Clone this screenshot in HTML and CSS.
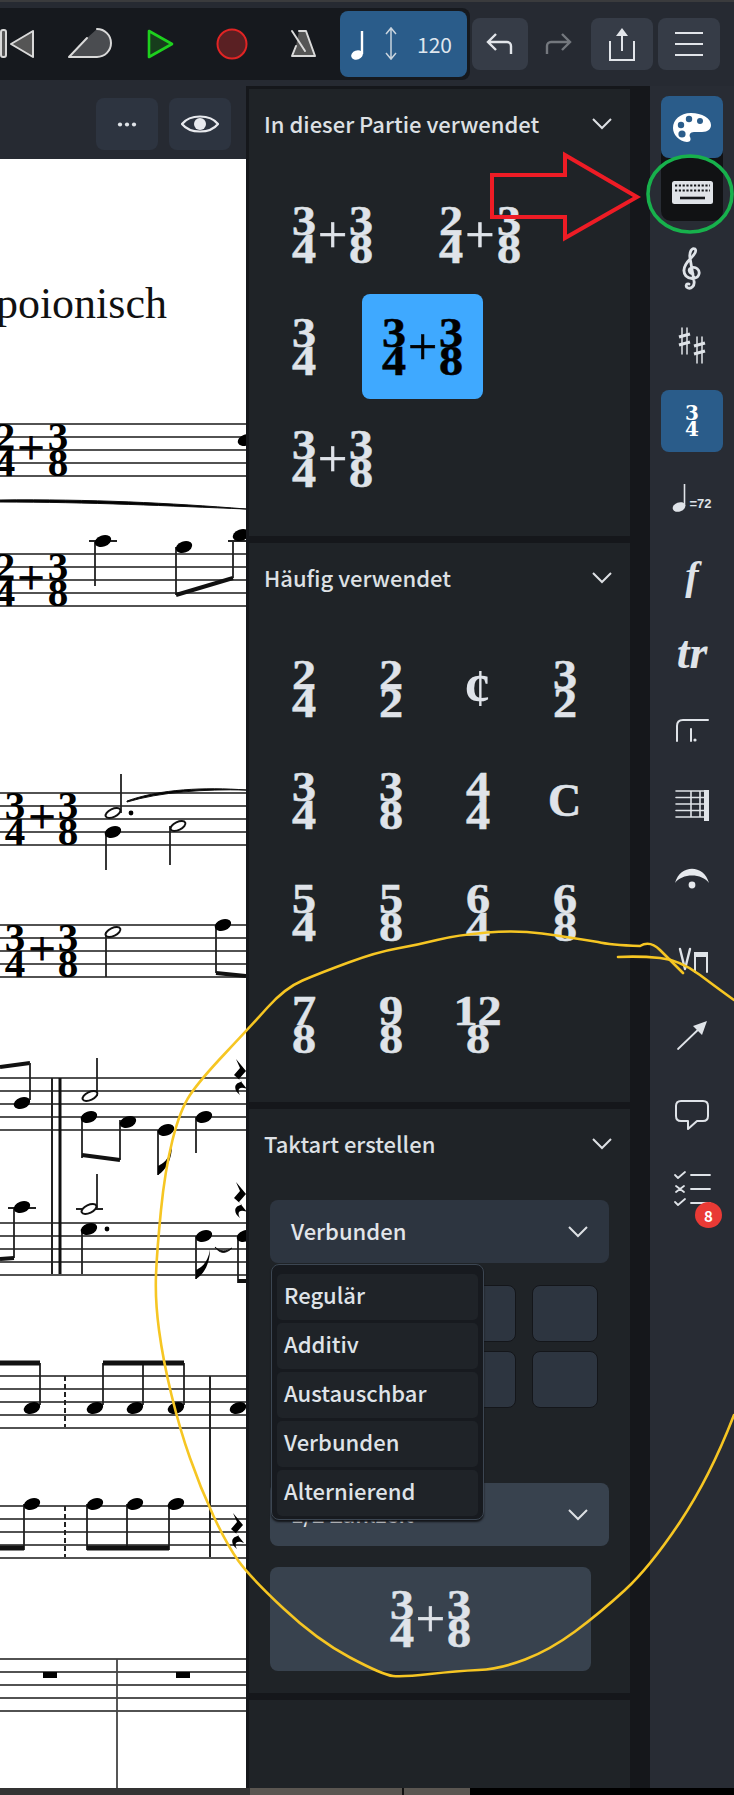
FILE: index.html
```html
<!DOCTYPE html>
<html lang="de">
<head>
  <meta charset="UTF-8">
  <title>Taktart erstellen</title>
  <link rel="stylesheet" href="styles.css">
</head>
<body>
  <div class="app">
    <!-- top toolbar -->
    <header class="topbar">
      <div class="transport">
        <svg class="slot" viewBox="-19 24 72 40"><rect class="ico-line" x="1" y="30" width="5" height="27" rx="2" fill="#555"/><path class="ico-line" d="M33 31 11 44l22 13z" fill="#555"/></svg>
        <svg class="slot" viewBox="53 24 72 40"><path d="M87 38 97 29a14 14 0 0 1 0 28H69z" fill="#4a4c50"/><path class="ico-line" d="M87 38 69 57h28a14 14 0 0 0 0-28" fill="none"/></svg>
        <svg class="slot" viewBox="125 24 72 40"><path d="M149 31 172 44 149 57z" fill="#173d1c" stroke="#1ed01e" stroke-width="2.6" stroke-linejoin="round"/></svg>
        <svg class="slot" viewBox="197 24 72 40"><circle cx="232" cy="44" r="14.5" fill="#5a2023" stroke="#e02424" stroke-width="2"/></svg>
        <svg class="slot" viewBox="269 24 72 40"><path class="ico-line" d="M299 31h7l9 25h-23l4-10" fill="#555"/><path class="ico-line" d="M292 31 305 51"/></svg>
        <button class="tempo">
          <svg width="32" height="40" viewBox="349 24 32 40"><ellipse cx="358" cy="55" rx="6" ry="4.6" fill="#fff" transform="rotate(-20 358 55)"/><path d="M363 31V54" stroke="#fff" stroke-width="2.4"/></svg>
          <svg width="22" height="40" viewBox="379 24 22 40"><path d="M390 29V58M385 34 390 28 395 34M385 53 390 59 395 53" fill="none" stroke="#c9d4de" stroke-width="1.5"/></svg>
          <span class="tempo-num">120</span>
        </button>
      </div>
      <button class="top-btn"><svg width="30" height="24" viewBox="0 0 30 24"><path d="M4 10h18a4 4 0 0 1 4 4v8M11 2 3 10l8 8" fill="none" stroke="#e2e5ea" stroke-width="2.4"/></svg></button>
      <span class="top-btn top-btn-off"><svg width="30" height="24" viewBox="0 0 30 24"><path d="M26 10H8a4 4 0 0 0-4 4v8M19 2l8 8-8 8" fill="none" stroke="#74787e" stroke-width="2.4"/></svg></span>
      <button class="top-btn top-btn-gap"><svg width="30" height="36" viewBox="0 0 30 36"><path d="M3 15v19h24V15M15 25V4" fill="none" stroke="#e2e5ea" stroke-width="2"/><path d="M9 10l6-8 6 8z" fill="#e2e5ea"/></svg></button>
      <button class="top-btn top-btn-wide"><svg width="30" height="24" viewBox="0 0 30 24"><path d="M1 1h28M1 12h28M1 23h28" stroke="#e2e5ea" stroke-width="2.2"/></svg></button>
    </header>

    <div class="main">
      <!-- score -->
      <section class="score-col">
        <div class="score-bar">
          <button class="score-btn"><svg width="20" height="5" viewBox="0 0 20 5"><circle cx="3" cy="2.5" r="2.1" fill="#dfe3e8"/><circle cx="10" cy="2.5" r="2.1" fill="#dfe3e8"/><circle cx="17" cy="2.5" r="2.1" fill="#dfe3e8"/></svg></button>
          <button class="score-btn"><svg width="38" height="26" viewBox="0 0 38 26"><path d="M1 13C9 3 29 3 37 13 29 23 9 23 1 13z" fill="none" stroke="#e8eaee" stroke-width="2.2"/><circle cx="19" cy="13" r="6" fill="#e8eaee"/></svg></button>
        </div>
        <svg class="score" viewBox="0 159 246 1629">
          <defs>
            <ellipse id="nh" rx="8.5" ry="5.6" transform="rotate(-20)"/>
            <ellipse id="hn" rx="8" ry="4" class="hollow" transform="rotate(-25)"/>
            <path id="st" d="M0 0H246M0 13H246M0 26H246M0 39H246M0 52H246"/>
            <g id="sig2">
              <text class="sig" x="5" y="26">2</text><text class="sig" x="5" y="52">4</text>
              <text class="sig-plus" x="31" y="40">+</text>
              <text class="sig" x="58" y="26">3</text><text class="sig" x="58" y="52">8</text>
            </g>
            <g id="sig3">
              <text class="sig" x="15" y="26">3</text><text class="sig" x="15" y="52">4</text>
              <text class="sig-plus" x="42" y="40">+</text>
              <text class="sig" x="68" y="26">3</text><text class="sig" x="68" y="52">8</text>
            </g>
            <path id="rest" d="M-5 -18 5 -6-2 2 6 12C0 9-5 11-1 18-9 12-6 5 1 5L-7-2-1-9z"/>
          </defs>

          <text class="title" x="167" y="318" text-anchor="end">poionisch</text>

          <g class="staff">
            <use href="#st" y="424"/><use href="#st" y="554"/>
            <use href="#st" y="793"/><use href="#st" y="925"/>
            <use href="#st" y="1078"/><use href="#st" y="1223"/>
            <use href="#st" y="1376"/><use href="#st" y="1506"/>
            <use href="#st" y="1659"/>
          </g>

          <use href="#sig2" y="424"/><use href="#sig2" y="554"/>
          <use href="#sig3" y="793"/><use href="#sig3" y="925"/>
          <use href="#nh" x="246" y="440"/>

          <!-- system 1 -->
          <path class="slur" d="M0 500C90 499 170 503 246 509 170 506 90 502 0 502z"/>
          <path class="stem" d="M89 541H117M95 541V586M176 547V595M233 578V541M228 541H246"/>
          <use href="#nh" x="103" y="541"/><use href="#nh" x="184" y="547"/><use href="#nh" x="241" y="535"/>
          <path class="beam" d="M176 595 233 578"/>

          <!-- system 2 -->
          <path class="stem" d="M121 774V813M106 832V870M170 826V865M106 932V977M216 925V973"/>
          <use href="#hn" x="113" y="813"/><use href="#nh" x="113" y="832"/><circle cx="131" cy="813" r="2.4"/>
          <use href="#hn" x="178" y="826"/>
          <path class="slur" d="M127 801C160 789 205 787 246 790 205 789 160 792 127 802z"/>
          <use href="#hn" x="113" y="932"/><use href="#nh" x="223" y="925"/>
          <path class="beam" d="M216 973 246 976"/>

          <!-- system 3 -->
          <path class="bar" d="M52 1078V1274"/><path class="bar-thick" d="M60 1078V1274"/>
          <path class="beam" d="M0 1067 30 1063"/>
          <path class="stem" d="M30 1063V1100M97 1058V1096M82 1117V1158M120 1120V1160M158 1130V1175M196 1117V1153"/>
          <use href="#nh" x="22" y="1103"/><use href="#hn" x="90" y="1096"/><use href="#nh" x="89" y="1117"/>
          <use href="#nh" x="128" y="1122"/><use href="#nh" x="166" y="1130"/><use href="#nh" x="204" y="1117"/>
          <path class="beam" d="M82 1155 120 1160"/>
          <path d="M158 1175C166 1170 172 1160 172 1145 170 1160 162 1164 158 1166z"/>
          <use href="#rest" x="241" y="1077"/>

          <path class="stem" d="M8 1208H36M14 1207V1258M76 1209H103M97 1174V1209M82 1229V1274M196 1236V1279M238 1236V1283"/>
          <use href="#nh" x="22" y="1207"/><use href="#hn" x="89" y="1209"/><use href="#nh" x="89" y="1229"/>
          <circle cx="107" cy="1229" r="2.4"/><use href="#nh" x="204" y="1236"/><use href="#nh" x="245" y="1236"/>
          <path class="beam" d="M0 1259 14 1258"/><path class="beam" d="M238 1281H246"/>
          <path d="M196 1279C204 1274 210 1264 210 1249 208 1264 200 1268 196 1270z"/>
          <path class="slur" d="M215 1247C220 1252 226 1252 232 1248 226 1254 220 1254 215 1247z"/>
          <use href="#rest" x="241" y="1200"/>

          <!-- system 4 -->
          <path class="dash" d="M65 1376V1427M65 1506V1557"/>
          <path class="bar" d="M210 1376V1557"/>
          <path class="stem" d="M40 1363V1405M103 1363V1405M143 1363V1405M184 1363V1405M24 1504V1550M87 1504V1550M127 1504V1550M169 1504V1550"/>
          <path class="beam-flat" d="M0 1363H40M103 1363H184M0 1548H24M87 1548H169"/>
          <use href="#nh" x="32" y="1408"/><use href="#nh" x="95" y="1408"/><use href="#nh" x="135" y="1408"/>
          <use href="#nh" x="176" y="1408"/><use href="#nh" x="238" y="1408"/>
          <use href="#nh" x="32" y="1504"/><use href="#nh" x="95" y="1504"/><use href="#nh" x="135" y="1504"/><use href="#nh" x="176" y="1504"/>
          <use href="#rest" x="238" y="1531"/>

          <!-- system 5 -->
          <path class="bar-thin" d="M117 1659V1788"/>
          <rect x="43" y="1672" width="14" height="6"/><rect x="176" y="1672" width="14" height="6"/>
        </svg>
      </section>

      <!-- palettes -->
      <div class="panels">
        <section class="panel panel-used">
          <div class="panel-head"><span>In dieser Partie verwendet</span><svg class="chev" viewBox="0 0 20 12"><path d="M1 1l9 9 9-9"/></svg></div>
          <div class="used-list">
            <div class="cell"><div class="ts"><span class="frac"><b>3</b><b>4</b></span><span class="plus">+</span><span class="frac"><b>3</b><b>8</b></span></div></div>
            <div class="cell"><div class="ts"><span class="frac"><b>2</b><b>4</b></span><span class="plus">+</span><span class="frac"><b>3</b><b>8</b></span></div></div>
            <div class="cell"><div class="ts"><span class="frac"><b>3</b><b>4</b></span></div></div>
            <div class="cell cell-active"><div class="ts"><span class="frac"><b>3</b><b>4</b></span><span class="plus">+</span><span class="frac"><b>3</b><b>8</b></span></div></div>
            <div class="cell"><div class="ts"><span class="frac"><b>3</b><b>4</b></span><span class="plus">+</span><span class="frac"><b>3</b><b>8</b></span></div></div>
          </div>
        </section>

        <section class="panel panel-common">
          <div class="panel-head"><span>Häufig verwendet</span><svg class="chev" viewBox="0 0 20 12"><path d="M1 1l9 9 9-9"/></svg></div>
          <div class="common-grid">
            <div class="ts"><span class="frac"><b>2</b><b>4</b></span></div>
            <div class="ts"><span class="frac"><b>2</b><b>2</b></span></div>
            <div class="ts"><span class="glyph cut">¢</span></div>
            <div class="ts"><span class="frac"><b>3</b><b>2</b></span></div>
            <div class="ts"><span class="frac"><b>3</b><b>4</b></span></div>
            <div class="ts"><span class="frac"><b>3</b><b>8</b></span></div>
            <div class="ts"><span class="frac"><b>4</b><b>4</b></span></div>
            <div class="ts"><span class="glyph">C</span></div>
            <div class="ts"><span class="frac"><b>5</b><b>4</b></span></div>
            <div class="ts"><span class="frac"><b>5</b><b>8</b></span></div>
            <div class="ts"><span class="frac"><b>6</b><b>4</b></span></div>
            <div class="ts"><span class="frac"><b>6</b><b>8</b></span></div>
            <div class="ts"><span class="frac"><b>7</b><b>8</b></span></div>
            <div class="ts"><span class="frac"><b>9</b><b>8</b></span></div>
            <div class="ts"><span class="frac"><b>12</b><b>8</b></span></div>
          </div>
        </section>

        <section class="panel panel-create">
          <div class="panel-head"><span>Taktart erstellen</span><svg class="chev" viewBox="0 0 20 12"><path d="M1 1l9 9 9-9"/></svg></div>
          <div class="create-body">
            <div class="select"><span>Verbunden</span><svg class="chev" viewBox="0 0 20 12"><path d="M1 1l9 9 9-9"/></svg></div>
            <div class="num-grid">
              <div class="num"></div><div class="num"></div><div class="num"></div>
              <div class="num"></div><div class="num"></div><div class="num"></div>
            </div>
            <div class="select select-light"><span>1/2 Zählzeit</span><svg class="chev" viewBox="0 0 20 12"><path d="M1 1l9 9 9-9"/></svg></div>
            <div class="preview"><div class="ts"><span class="frac"><b>3</b><b>4</b></span><span class="plus">+</span><span class="frac"><b>3</b><b>8</b></span></div></div>
          </div>
          <ul class="popup">
            <li>Regulär</li>
            <li>Additiv</li>
            <li>Austauschbar</li>
            <li>Verbunden</li>
            <li>Alternierend</li>
          </ul>
        </section>

        <section class="panel panel-empty"></section>
      </div>

      <!-- right tool strip -->
      <nav class="sidebar">
        <div class="tool-group">
          <div class="tool tool-on"><svg viewBox="661 96 62 62"><path d="M691 113c-11 0-18 7-18 15 0 7 6 13 14 14 4 0 4-3 3-5s0-5 4-5h8c6 0 9-3 9-7 0-7-9-12-20-12z" fill="#fff"/><circle cx="681" cy="125" r="3.2" fill="#2a5c8a"/><circle cx="689" cy="119" r="3.2" fill="#2a5c8a"/><circle cx="700" cy="121" r="3" fill="#2a5c8a"/><circle cx="682" cy="134" r="3.6" fill="#2a5c8a"/></svg></div>
          <div class="tool tool-keys"><svg viewBox="661 159 62 62"><rect x="672" y="181" width="41" height="23" rx="2.5" fill="#e0e3e8"/><path d="M675 185.500h35M675 190.500h35" stroke="#15171b" stroke-width="1.8" stroke-dasharray="2.2 1.6"/><path d="M680 198h25" stroke="#15171b" stroke-width="2.6"/></svg></div>
        </div>
        <div class="tool"><svg viewBox="661 236 62 62"><path class="ico-soft" transform="translate(682 248)" d="M11 26C7 25 6 21 9 20 14 18 18 22 17 26 16 31 8 32 4 28-1 22 4 15 9 10 13 6 15 3 13 1 10-1 7 4 8 10L12 33C13 38 9 41 6 40 3 39 4 35 7 36" stroke-width="2.8"/></svg></div>
        <div class="tool"><svg viewBox="661 313 62 62"><g class="ico-soft" stroke-width="1.5"><path d="M682 328V354M687 328V354"/><path d="M697 337V363M702 337V363"/></g><path d="M679 337 690 334M679 345 690 342M694 346 705 343M694 354 705 351" stroke="#dfe3e8" stroke-width="3.2"/></svg></div>
        <div class="tool tool-on"><span class="frac frac-small"><b>3</b><b>4</b></span></div>
        <div class="tool tool-tempo"><svg width="18" height="30" viewBox="0 0 18 30"><ellipse cx="7" cy="24" rx="6.500" ry="4.600" fill="#dfe3e8" transform="rotate(-20 7 24)"/><path d="M12.500 1V23" stroke="#dfe3e8" stroke-width="1.6"/></svg><span>=72</span></div>
        <div class="tool"><span class="dyn">f</span></div>
        <div class="tool"><span class="dyn dyn-tr">tr</span></div>
        <div class="tool"><svg viewBox="661 698 62 62"><path class="ico-soft" d="M677 741V726Q677 720 683 720H708M691 729V741" stroke-width="2"/><circle cx="695" cy="740" r="1.6" fill="#dfe3e8"/></svg></div>
        <div class="tool"><svg viewBox="661 775 62 62"><path class="ico-soft" d="M676 791H706M676 797.500H706M676 804H706M676 810.500H706M676 817H706M691 791V817M700 791V817" stroke-width="1.6"/><rect x="704" y="790" width="5" height="31" fill="#dfe3e8"/></svg></div>
        <div class="tool"><svg viewBox="661 852 62 62"><path d="M675 883C680 864 704 864 709 883 702 873 682 873 675 883z" fill="#e6e9ed"/><circle cx="692" cy="885" r="3.4" fill="#e6e9ed"/></svg></div>
        <div class="tool"><svg viewBox="661 929 62 62"><path class="ico-soft" d="M680 949 685 969 690 949" stroke-width="2.4"/><path class="ico-soft" d="M695 972V954H707V972" stroke-width="2"/><rect x="694" y="952" width="14" height="5" fill="#dfe3e8"/></svg></div>
        <div class="tool"><svg viewBox="661 1006 62 62"><path class="ico-soft" d="M678 1049 703 1025" stroke-width="1.8"/><path d="M707 1021 693 1026 702 1035z" fill="#dfe3e8"/></svg></div>
        <div class="tool"><svg viewBox="661 1083 62 62"><path class="ico-soft" d="M681 1101H703Q708 1101 708 1106V1116Q708 1121 703 1121H697L688 1129V1121H681Q676 1121 676 1116V1106Q676 1101 681 1101z" stroke-width="2"/></svg></div>
        <div class="tool">
          <svg viewBox="661 1160 62 62"><path class="ico-soft" d="M675 1175 678 1178 685 1172M676 1186 684 1192M684 1186 676 1192M675 1202 678 1205 685 1199M691 1175H710M691 1189H710M691 1203H710" stroke-width="1.8"/></svg>
          <span class="badge">8</span>
        </div>
      </nav>
    </div>

    <div class="taskbar"><span></span></div>

    <!-- hand-drawn marks on top of the screenshot -->
    <svg class="marks" viewBox="0 0 734 1795">
      <path class="mark-red" d="M492 175H565V155L637 197 565 238V217H492z"/>
      <ellipse class="mark-green" cx="690" cy="194" rx="42" ry="38"/>
      <path class="mark-yellow" d="M683 973Q670 960 660 950T640 946Q610 945 598 942Q567 937 542 933.500Q517 930 487 932.500Q457 935 437 940Q417 945 397 948.500Q377 952 348.500 962.500Q320 973 302.500 980.500Q285 988 267.500 1007.500Q250 1027 225 1053.500Q200 1080 190 1095Q180 1110 172.500 1140Q165 1170 161 1210Q157 1250 156 1275Q155 1300 159 1330Q163 1360 171.500 1395Q180 1430 190 1458Q200 1487 213.500 1516Q227 1545 238.500 1561Q250 1577 283.500 1608.500Q317 1640 350 1657.500Q383 1675 393 1676Q403 1677 430 1674Q457 1671 478.500 1670Q500 1669 525 1659.500Q550 1650 575 1631.500Q600 1613 625 1590Q650 1567 680 1522Q710 1477 734 1415"/>
      <path class="mark-yellow" d="M618 957Q640 956 660 958T700 975T734 1000"/>
    </svg>
  </div>
</body>
</html>
```

FILE: styles.css
```css
* {
  box-sizing: border-box;
}

body {
  margin: 0;
  background: #15171b;
  font-family: "Noto Sans CJK SC", "Noto Sans", sans-serif;
  color: #e2e5ea;
}

button {
  border: none;
  padding: 0;
  color: inherit;
  font: inherit;
}

.app {
  position: relative;
  width: 734px;
  height: 1795px;
  overflow: hidden;
  display: flex;
  flex-direction: column;
}

/* top toolbar */
.topbar {
  height: 86px;
  flex: none;
  display: flex;
  align-items: flex-start;
  background: #262a32;
  border-top: 2px solid #3a3b3d;
  padding-top: 6px;
}

.transport {
  width: 470px;
  height: 72px;
  margin-right: 2px;
  display: flex;
  align-items: center;
  background: #16191e;
  border-radius: 0 8px 8px 0;
  overflow: hidden;
}

.slot {
  width: 72px;
  height: 40px;
  flex: none;
}

.slot:first-child {
  margin-left: -19px;
}

.ico-line {
  stroke: #d9d9d9;
  stroke-width: 2;
  stroke-linejoin: round;
  stroke-linecap: round;
  fill: none;
}

.slot .ico-line[fill="#555"] {
  fill: #555;
}

.tempo {
  width: 127px;
  height: 66px;
  margin-left: -1px;
  flex: none;
  display: flex;
  align-items: center;
  padding-left: 8px;
  background: #2a5c8a;
  border-radius: 8px;
}

.tempo-num {
  margin-left: 15px;
  font-size: 21px;
  color: #dfe6ee;
}

.top-btn {
  width: 56px;
  height: 52px;
  margin-top: 10px;
  flex: none;
  display: flex;
  align-items: center;
  justify-content: center;
  background: #363c47;
  border-radius: 8px;
}

.top-btn-off {
  width: 60px;
  background: none;
}

.top-btn-gap {
  width: 62px;
  margin-left: 3px;
}

.top-btn-wide {
  width: 62px;
  margin-left: 5px;
}

.main {
  flex: 1;
  display: flex;
  align-items: stretch;
  min-height: 0;
}

/* score */
.score-col {
  width: 246px;
  flex: none;
  display: flex;
  flex-direction: column;
}

.score-bar {
  height: 73px;
  flex: none;
  display: flex;
  justify-content: flex-end;
  gap: 11px;
  padding: 12px 15px 0 0;
  background: #262a32;
}

.score-btn {
  width: 62px;
  height: 52px;
  display: flex;
  align-items: center;
  justify-content: center;
  background: #2d3440;
  border-radius: 8px;
}

.score {
  display: block;
  width: 246px;
  height: 1629px;
  background: #fff;
}

.title {
  font: 44px "Liberation Serif", serif;
  fill: #111;
}

.staff {
  stroke: #1a1a1a;
  stroke-width: 1.5;
  fill: none;
}

.sig {
  font: bold 41px "Liberation Serif", serif;
  text-anchor: middle;
}

.sig-plus {
  font: 48px "Liberation Serif", serif;
  text-anchor: middle;
  stroke: #000;
  stroke-width: 0.8;
}

.stem {
  stroke: #222;
  stroke-width: 1.8;
  fill: none;
}

.beam {
  stroke: #111;
  stroke-width: 4;
  fill: none;
}

.beam-flat {
  stroke: #111;
  stroke-width: 5;
  fill: none;
}

.hollow {
  fill: #fff;
  stroke: #111;
  stroke-width: 2;
}

.slur {
  stroke: #111;
  stroke-width: 1;
}

.bar {
  stroke: #222;
  stroke-width: 2;
}

.bar-thick {
  stroke: #111;
  stroke-width: 3;
}

.bar-thin {
  stroke: #444;
  stroke-width: 1.8;
}

.dash {
  stroke: #222;
  stroke-width: 2;
  stroke-dasharray: 5 3;
}

/* palettes */
.panels {
  width: 381px;
  margin-left: 3px;
  flex: none;
  display: flex;
  flex-direction: column;
  gap: 7px;
  padding-top: 3px;
  height: 1702px;
}

.panel {
  position: relative;
  background: #1f2327;
  flex: none;
}

.panel-used { height: 447px; }
.panel-common { height: 559px; }
.panel-create { height: 584px; }
.panel-empty { flex: 1; }

.panel-head {
  height: 70px;
  margin-bottom: 2px;
  padding: 0 18px 0 15px;
  display: flex;
  align-items: center;
  justify-content: space-between;
  font-size: 22px;
  font-weight: 500;
  color: #dde0e4;
}

.panel-head span {
  margin-top: -2px;
}

.chev {
  width: 20px;
  height: 12px;
  fill: none;
  stroke: #dde0e4;
  stroke-width: 2;
}

/* time signatures are plain stacked digits */
.ts {
  height: 56px;
  display: inline-flex;
  align-items: center;
  justify-content: center;
  font-family: "Liberation Serif", serif;
  color: #dfe3e9;
}

.frac {
  display: flex;
  flex-direction: column;
  align-items: center;
}

.frac b {
  display: block;
  min-width: 24px;
  text-align: center;
  font-size: 43px;
  line-height: 28px;
  font-weight: 700;
  transform: scaleX(1.12);
  -webkit-text-stroke: 0.5px currentColor;
}

.plus {
  font-size: 52px;
  line-height: 56px;
  margin: 0 2px;
  -webkit-text-stroke: 0.6px currentColor;
}

.glyph {
  font-size: 46px;
  font-weight: 700;
  line-height: 56px;
  -webkit-text-stroke: 0.6px currentColor;
}

.glyph.cut {
  font-size: 52px;
  -webkit-text-stroke: 0;
}

.used-list {
  display: flex;
  flex-wrap: wrap;
  gap: 7px 26px;
  padding: 21px 20px 0 23px;
}

.cell {
  height: 105px;
  padding: 0 20px;
  display: flex;
  align-items: center;
  border-radius: 8px;
}

.cell-active {
  background: #3fa9ff;
}

.cell-active .ts {
  color: #000;
}

.common-grid {
  display: grid;
  grid-template-columns: repeat(4, 87px);
  grid-auto-rows: 105px;
  row-gap: 7px;
  padding: 21px 0 0 11px;
  justify-items: center;
  align-items: center;
}

.create-body {
  padding: 19px 21px 0;
  display: flex;
  flex-direction: column;
}

.select {
  height: 63px;
  padding: 0 21px;
  display: flex;
  align-items: center;
  justify-content: space-between;
  background: #2d3540;
  border-radius: 8px;
  font-size: 22px;
  font-weight: 500;
}

.select span {
  margin-top: -4px;
}

.select-light {
  background: #38424e;
}

.num-grid {
  display: grid;
  grid-template-columns: repeat(3, 66px);
  grid-auto-rows: 57px;
  gap: 9px 16px;
  margin: 22px 0 75px;
  justify-content: end;
  width: 328px;
}

.num {
  background: #2d3540;
  border: 1px solid #14161a;
  border-radius: 8px;
}

.preview {
  width: 321px;
  height: 104px;
  margin-top: 21px;
  display: flex;
  align-items: center;
  justify-content: center;
  background: #38424e;
  border-radius: 8px;
}

.popup {
  position: absolute;
  top: 155px;
  left: 22px;
  width: 213px;
  height: 256px;
  margin: 0;
  padding: 9px 5px 4px;
  list-style: none;
  display: flex;
  flex-direction: column;
  gap: 3px;
  background: #171a1f;
  border: 1px solid #3c4652;
  border-radius: 8px;
  box-shadow: 0 2px 2px #14161a;
}

.popup li {
  height: 46px;
  flex: none;
  padding: 0 0 6px 7px;
  display: flex;
  align-items: center;
  background: #1f2328;
  border-radius: 5px;
  font-size: 22px;
  font-weight: 500;
  color: #dfe3e8;
}

/* right tool strip */
.sidebar {
  width: 84px;
  margin-left: auto;
  flex: none;
  height: 1702px;
  padding: 10px 0 0 11px;
  display: flex;
  flex-direction: column;
  gap: 15px;
  background: #282c34;
}

.tool-group {
  width: 62px;
  display: flex;
  flex-direction: column;
  background: #111214;
  border-radius: 10px;
}

.tool {
  position: relative;
  width: 62px;
  height: 62px;
  flex: none;
  display: flex;
  align-items: center;
  justify-content: center;
}

.tool > svg:only-of-type {
  width: 62px;
  height: 62px;
}

.tool-on {
  background: #2a5c8a;
  border-radius: 8px;
}

.tool-keys {
  height: 63px;
}

.tool-tempo > svg:only-of-type {
  width: 18px;
  height: 30px;
}

.tool-tempo span {
  align-self: center;
  margin: 10px 0 0 -1px;
  font: bold 13px "Liberation Sans", sans-serif;
  color: #dfe3e8;
}

.ico-soft {
  fill: none;
  stroke: #dfe3e8;
  stroke-linecap: round;
  stroke-linejoin: round;
}

.frac-small b {
  min-width: 0;
  transform: none;
  font: bold 20px "DejaVu Serif", serif;
  line-height: 16px;
  color: #fff;
  -webkit-text-stroke: 0;
}

.dyn {
  font: italic bold 40px "Liberation Serif", serif;
  color: #dfe3e8;
}

.dyn-tr {
  font-size: 46px;
}

.badge {
  position: absolute;
  left: 34px;
  top: 42px;
  width: 27px;
  height: 26px;
  display: flex;
  align-items: center;
  justify-content: center;
  background: #e93a35;
  border-radius: 50%;
  font-size: 15px;
  font-weight: 700;
  color: #fff;
}

.taskbar {
  height: 7px;
  flex: none;
  background: #000;
}

.taskbar span {
  display: block;
  width: 470px;
  height: 7px;
  background: linear-gradient(90deg, #333 250px, #5a5651 250px, #5a5651 402px, #111 402px, #111 404px, #5a5651 404px);
}

/* annotations drawn on the screenshot */
.marks {
  position: absolute;
  top: 0;
  left: 0;
  width: 734px;
  height: 1795px;
  pointer-events: none;
  fill: none;
}

.mark-red {
  stroke: #ee1c25;
  stroke-width: 4;
}

.mark-green {
  stroke: #17b14c;
  stroke-width: 3.6;
}

.mark-yellow {
  stroke: #f6c623;
  stroke-width: 2.6;
  stroke-linecap: round;
}
```
